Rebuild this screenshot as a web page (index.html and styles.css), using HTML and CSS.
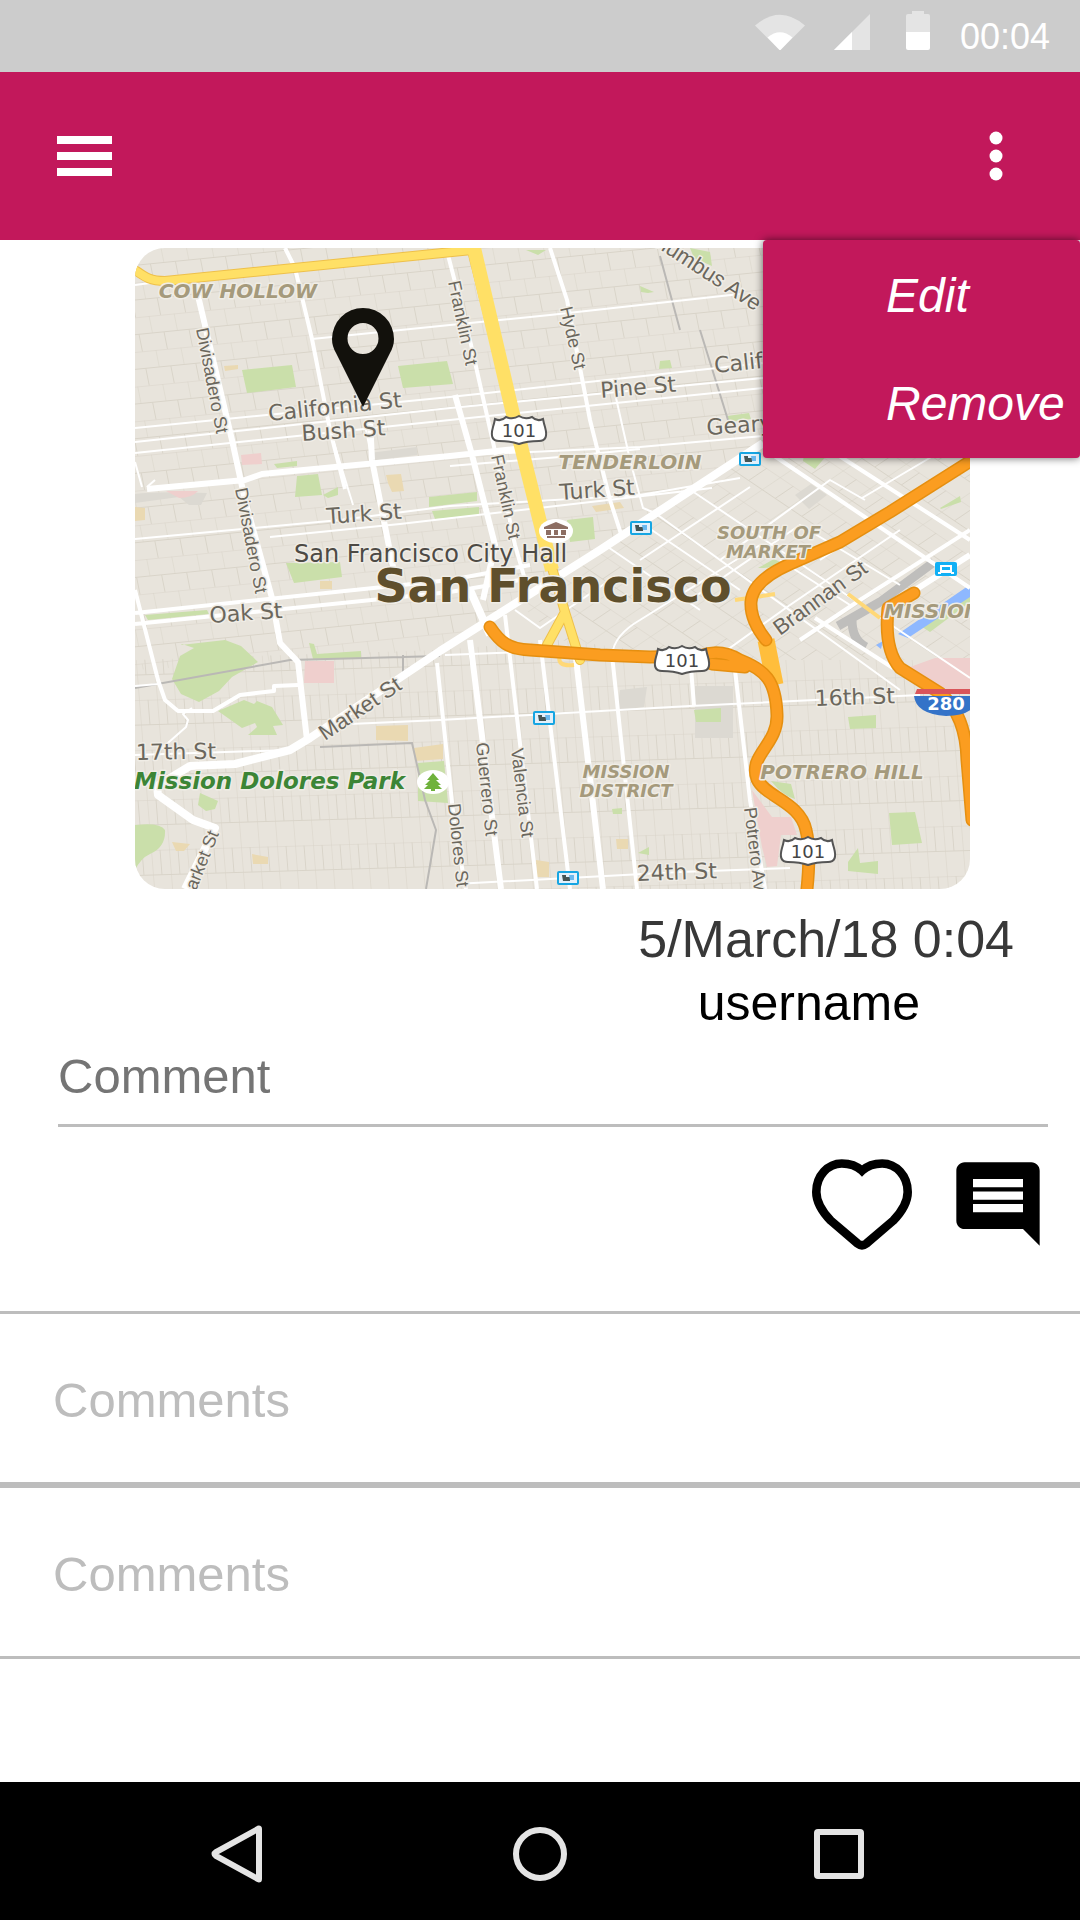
FILE: index.html
```html
<!DOCTYPE html>
<html lang="en">
<head>
<meta charset="utf-8">
<meta name="viewport" content="width=device-width, initial-scale=1">
<title>Post</title>
<link rel="stylesheet" href="styles.css">
</head>
<body>
<div class="status-bar">
  <svg class="status-icons" viewBox="755 11 175 39" width="175" height="39" aria-hidden="true">
    <path class="dim" d="M755 25.500Q780 4 805 25.500L780 50.500z"/>
    <path class="lit" d="M767.500 37.500Q780 27 792.500 37.500L780 50.500z"/>
    <path class="dim" d="M834 50L870 14V50z"/>
    <path class="lit" d="M834 50L852 32V50z"/>
    <path class="dim" d="M912 11h12v3h4q2 0 2 2v16h-24V16q0-2 2-2h4z"/>
    <path class="lit" d="M906 32h24v16q0 2-2 2h-20q-2 0-2-2z"/>
  </svg>
  <time class="clock">00:04</time>
</div>

<header class="app-bar">
  <button class="icon-button" type="button" aria-label="Menu">
    <svg viewBox="0 0 55 40" width="55" height="40"><path fill="#fff" d="M0 0h55v8H0zM0 16h55v8H0zM0 32h55v8H0z"/></svg>
  </button>
  <button class="icon-button" type="button" aria-label="More options" aria-expanded="true">
    <svg viewBox="0 0 14 50" width="14" height="50" fill="#fff"><circle cx="7" cy="7" r="6.500"/><circle cx="7" cy="25" r="6.500"/><circle cx="7" cy="43" r="6.500"/></svg>
  </button>
  <div class="menu">
    <button class="menu-item" type="button">Edit</button>
    <button class="menu-item" type="button">Remove</button>
  </div>
</header>

<main class="post">
  <svg class="map" viewBox="135 248 835 641" role="img" aria-label="Map of San Francisco">
    <defs>
      <pattern id="grid-north" width="25" height="34" patternUnits="userSpaceOnUse" patternTransform="matrix(1 -0.1 0.2 1 135 248)">
        <path class="lane" d="M0 0H25M0 17H25M0 0V17M12 17V34"/>
      </pattern>
      <pattern id="grid-south" width="18" height="50" patternUnits="userSpaceOnUse" patternTransform="matrix(1 -0.03 0.08 1 135 650)">
        <path class="lane" d="M0 0H18M0 25H18M0 0V50M9 0V25"/>
      </pattern>
      <pattern id="grid-soma" width="32" height="44" patternUnits="userSpaceOnUse" patternTransform="matrix(0.83 0.56 -0.83 0.56 0 0)">
        <path class="lane" d="M0 0H32M0 22H32M0 0V44M16 0V22"/>
      </pattern>
      <g id="shield">
        <path fill="#fff" stroke="#555" stroke-width="2" d="M-24-11q6 3 11-2q7 3 13-1q6 4 13 1q5 5 11 2q1 5 2 8q4 14-6 14q-12 0-20 3q-8-3-20-3q-10 0-6-14q1-3 2-8z"/>
        <text class="shield-text" y="7">101</text>
      </g>
      <g id="transit">
        <rect x="-10" y="-6" width="20" height="12" rx="1" fill="#e3f1fb" stroke="#16a5e2" stroke-width="2"/>
        <path fill="#455" d="M-6-3h4v2h4v4h-7z"/><path fill="#6bb9ef" d="M1-3h5v5H2z"/>
      </g>
    </defs>

    <rect x="135" y="248" width="835" height="641" fill="#e8e4dc"/>
    <path fill="url(#grid-north)" d="M135 248H970V440L760 440L440 650L135 670z"/>
    <path fill="url(#grid-south)" d="M135 660L440 650L560 640L720 660H970V889H135z"/>
    <path fill="url(#grid-soma)" d="M760 440H970V660H720L560 640L520 605z"/>

    <g fill="#dcd9d2">
      <path d="M135 494q20-3 72-1l-6 12h-12l-10-8l-44 6z"/><path d="M369 453l48-6v8l-48 6zM620 690l27-3l-3 20l-27 3zM695 686h38v52h-38z"/>
      <path d="M795 495l16-11l16 11l-18 14z"/>
    </g>
    <g fill="#cadfaa">
      <path d="M242 370l50-5l4 22l-49 6zM398 366l49-5l6 23l-50 4zM421 238l11-1v6l-10 2zM274 464l23-3v5l-20 2zM297 476l21-2l4 21l-27 2zM323 495l15-8v8l-10 3zM429 497l48-5v9l-48 6zM432 511l47-4v8l-44 4z"/>
      <path d="M286 563l54-1l2 15l-48 6zM145 615l62-5l2 4l-61 6zM181 645l44-5l16 6l17 16l-26 15l-13 14l-20 11l-18-8l-9-15l8-23l14-8l-12-4z"/>
      <path d="M218 711l26-11l10 4l3-3l15 6l11 18l-10 1l4 9h-29l9-8l-2-4l-13 5zM309 643l5 1l3 10l44-3v7l-48 1zM418 763l26-2l4 42l-30-2zM200 793l18 8l-3 8l-9 2l-8-6zM135 825q25-3 30 5q1 17-15 24q-9 4-15 16z"/>
      <path d="M567 520l26-3l2 22l-25 3zM526 250h20l-8 5zM640 286l14 6l-6 1l-7-1zM660 361l10-1l2 8l-13 1zM727 416l22-3l2 6l-22 3zM804 455l24-1l-13 15l-12-8zM940 508l20-12l1 6l-20 7z"/>
      <path d="M694 710l27-2v14h-25zM848 717l28-2v13l-26 1zM889 813l26-1l7 31l-30 2zM848 862l10-14l2 15l18-2v13l-30-3zM771 781l20 3l4 15q-12-3-24-18zM612 809l10-1v6h-9zM638 853l11-6v8zM690 248l20 4l2 14l-18-8zM758 568l16-9l12 6l-22 3z"/>
      <path d="M919 625l51-30v7l-40 30z"/>
    </g>
    <g fill="#efcfcd"><path d="M241 455l20-2l1 11l-20 1zM166 491h32q-6 7-19 7zM305 661h29v22h-30zM910 667l25-9h35v35h-30zM752 790l20 27h19l6 18h-16l-4 31l-10 1l-5-20z"/></g>
    <g fill="#ead9b2"><path d="M386 475l15-1l3 17l-12 1l-4-9zM135 507l10 1v12l-10 1zM224 366l14-1v4l-13 2zM376 726l32-1v16l-32-1zM414 748l29-4v15l-28 2zM172 842l18 2l-6 7h-8zM252 854l16 3v7h-15zM320 581h12v8h-12zM592 506l28-4l4 6l-28 4zM536 860l13 2v15h-12zM616 839h12v10h-11z"/></g>
    <path fill="#8eb8ff" d="M898 634l70-48h2v11l-62 41zM876 645l7-4l-2 8z"/>
    <path fill="none" stroke="#bfbebc" stroke-width="9" d="M838 626L880 602L934 562M852 620q0 20 14 27"/>
    <path fill="none" stroke="#bab8b5" stroke-width="2" d="M135 688L290 660L440 656M320 747L412 743L425 800L436 830L426 889M660 256L680 330M700 330L728 420M403 655v25"/>

    <!-- local streets -->
    <g class="road thin">
      <path d="M312 339L450 325L550 315L740 294M135 428L450 397L763 363M135 442L450 408L763 378M135 453L450 420L763 388M440 456L640 447L763 436M450 466L560 457L640 449M135 539L340 520L450 506L640 495L740 478M270 537L400 524L712 488M135 285L165 281"/>
      <path d="M612 380L630 460L643 508L655 513L900 690M135 755L290 750M350 724L440 720L690 706L920 695M135 686L158 684M445 655L545 651M455 884L680 872L790 868M365 425L372 460L392 570M330 430L353 505"/>
      <path d="M135 462L142 487M155 480L147 487M160 750L186 727L188 720L183 714L192 708"/>
      <path d="M692 491L970 678M640 522L740 590M605 545L700 610M515 610L540 628L610 580M720 560L830 480L865 500M640 560L750 487M690 600L800 525L900 585M612 655Q614 635 640 620L760 545M720 655L790 605L900 530M780 560L850 605M862 498L960 440M820 560L940 480"/>
    </g>
    <!-- avenues -->
    <g class="road">
      <path d="M285 248L295 268L312 339L330 430L345 489M448 255L470 340L497 460L515 545L528 590M550 248L567 300L590 420L610 500L622 537M135 590L158 680L165 700L178 711L213 711L240 695L274 691V686L298 685M135 613L450 580L530 565M135 624L450 592L520 580"/>
      <path d="M505 615L537 889M540 640L570 889M612 655L637 889M735 670L750 800L765 889M690 655L694 706M437 663L455 830L466 889"/>
      <path d="M770 453L970 588M830 450L970 540M800 640L860 600L970 530M815 618L893 668"/>
    </g>
    <!-- main roads -->
    <g class="road wide">
      <path d="M195 283L232 440L245 500L272 598L280 643L298 662L307 740M147 489L245 480L262 474L450 456L525 448M455 395L472 455L495 545L483 600M370 420L372 460L394 572M470 640L480 720L501 889M575 650L603 889"/>
      <path class="market" d="M185 889L215 828L193 820L158 795L157 786L190 766L235 764L290 750L310 738L440 651L600 550L763 443M470 590L490 635"/>
      <path d="M890 606L970 555"/>
    </g>

    <g class="highway yellow">
      <path class="edge" d="M135 270C145 277 150 281 165 281L472 250L512 410L552 568L565 612L547 645M565 612L580 660"/>
      <path d="M135 270C145 277 150 281 165 281L472 250L512 410L552 568L565 612L547 645M565 612L580 660"/>
    </g>
    <path fill="none" stroke="#ffe066" stroke-width="14" d="M474 248L512 410L552 570"/>
    <path fill="none" stroke="#ffd877" stroke-width="4" d="M848 594L880 618M560 655q-4 12 14 10M735 600l40-6"/>
    <path fill="none" stroke="#ffbe3c" stroke-width="17" d="M766 640L775 685"/>
    <g class="highway orange">
      <path class="edge" d="M490 627C500 642 508 649 530 650L600 655L650 657L700 656Q720 648 740 660C765 670 776 680 777 715C778 745 748 755 757 779C765 797 800 802 806 830Q811 850 807 889M712 664L745 667M980 455L890 512L840 542L790 564C765 575 752 588 751 602Q750 620 766 640M914 593L888 608Q884 650 900 668L940 693Q966 715 967 760L972 820"/>
      <path d="M490 627C500 642 508 649 530 650L600 655L650 657L700 656Q720 648 740 660C765 670 776 680 777 715C778 745 748 755 757 779C765 797 800 802 806 830Q811 850 807 889M712 664L745 667M980 455L890 512L840 542L790 564C765 575 752 588 751 602Q750 620 766 640M914 593L888 608Q884 650 900 668L940 693Q966 715 967 760L972 820"/>
    </g>

    <!-- district names -->
    <g class="district">
      <text x="238" y="298">COW HOLLOW</text>
      <text x="630" y="469">TENDERLOIN</text>
      <text class="two-line" x="769" y="539">SOUTH OF</text>
      <text class="two-line" x="768" y="558">MARKET</text>
      <text class="two-line" x="626" y="778">MISSION</text>
      <text class="two-line" x="626" y="797">DISTRICT</text>
      <text x="842" y="779">POTRERO HILL</text>
      <text class="from-left" x="884" y="618">MISSION BAY</text>
    </g>

    <!-- street names running across -->
    <g class="street">
      <text transform="translate(269 421) rotate(-6)">California St</text>
      <text transform="translate(302 441) rotate(-4)">Bush St</text>
      <text transform="translate(327 524) rotate(-4)">Turk St</text>
      <text transform="translate(210 623) rotate(-4)">Oak St</text>
      <text transform="translate(601 398) rotate(-5)">Pine St</text>
      <text transform="translate(560 500) rotate(-4)">Turk St</text>
      <text transform="translate(715 373) rotate(-6)">California St</text>
      <text transform="translate(707 435) rotate(-4)">Geary St</text>
      <text transform="translate(136 760) rotate(-1)">17th St</text>
      <text transform="translate(815 706) rotate(-2)">16th St</text>
      <text transform="translate(637 881) rotate(-2)">24th St</text>
    </g>
    <!-- street names running along slopes and avenues -->
    <g class="avenue">
      <text transform="translate(196 329) rotate(79)">Divisadero St</text>
      <text transform="translate(235 489) rotate(79)">Divisadero St</text>
      <text transform="translate(448 282) rotate(78)">Franklin St</text>
      <text transform="translate(491 456) rotate(78)">Franklin St</text>
      <text transform="translate(560 308) rotate(77)">Hyde St</text>
      <text transform="translate(476 743) rotate(84)">Guerrero St</text>
      <text transform="translate(511 749) rotate(83)">Valencia St</text>
      <text transform="translate(448 804) rotate(84)">Dolores St</text>
      <text transform="translate(744 808) rotate(83)">Potrero Ave</text>
      <text transform="translate(196 891) rotate(-68)">arket St</text>
      <text class="slope" transform="translate(325 741) rotate(-34)">Market St</text>
      <text class="slope" transform="translate(780 636) rotate(-36)">Brannan St</text>
      <text class="slope" transform="translate(650 243) rotate(33)">olumbus Ave</text>
    </g>

    <text class="place" x="294" y="562">San Francisco City Hall</text>
    <text class="city" x="553" y="602">San Francisco</text>
    <text class="park" x="134" y="789">Mission Dolores Park</text>

    <ellipse cx="433" cy="782" rx="16" ry="12" fill="#fff"/>
    <path fill="#6fb23c" d="M433 773l6 7h-3l5 5h-3l4 4h-7v2h-4v-2h-7l4-4h-3l5-5h-3z"/>
    <ellipse cx="556" cy="531" rx="17" ry="12" fill="#fff"/>
    <path fill="#8d6e63" d="M556 522l12 5v2h-24v-2zM546 530h5v5h-5zM554 530h4v5h-4zM561 530h5v5h-5zM547 536h18v2h-18z"/>

    <use href="#shield" x="519" y="430"/>
    <use href="#shield" x="682" y="660"/>
    <use href="#shield" x="808" y="851"/>
    <use href="#transit" x="750" y="459"/>
    <use href="#transit" x="641" y="528"/>
    <use href="#transit" x="544" y="718"/>
    <use href="#transit" x="568" y="878"/>
    <rect x="935" y="562" width="22" height="14" rx="2" fill="#12b0f5"/>
    <path fill="#fff" d="M940 565h12v7h2v2h-3v-1h-10v1h-3v-2h2zM942 567v3h8v-3z"/>
    <path fill="#d9555b" d="M917 689h53v5h-55z"/>
    <path fill="#3473c8" d="M914 696h64q-2 20-32 20q-30-2-32-20z"/>
    <text class="interstate" x="946" y="710">280</text>

    <path fill="#12110c" fill-rule="evenodd" d="M363 407L336 353Q332 346 332 339A31 31 0 0 1 394 339Q394 346 390 353zM363 323a15.500 15.500 0 1 0 0 31a15.500 15.500 0 1 0 0-31z"/>
  </svg>

  <div class="meta">
    <time class="date">5/March/18 0:04</time>
    <span class="username">username</span>
  </div>

  <input class="comment-input" type="text" placeholder="Comment" aria-label="Comment">

  <div class="actions">
    <button class="icon-button" type="button" aria-label="Like">
      <svg viewBox="755 805 302 274" width="100" height="91"><path fill="none" stroke="#000" stroke-width="26" d="M906 840C890 825 868 818 845 818C803 818 768 855 768 904C768 940 790 968 812 991L893 1060Q906 1070 919 1060L1000 991C1022 968 1044 940 1044 904C1044 855 1009 818 967 818C944 818 922 825 906 840z"/></svg>
    </button>
    <button class="icon-button" type="button" aria-label="Comments">
      <svg viewBox="0 0 24 24" width="100" height="100"><path d="M22 4c0-1.100-.9-2-2-2H4c-1.100 0-2 .9-2 2v12c0 1.100.9 2 2 2h14l4 4V4zM18 14H6v-2h12v2zM18 11H6V9h12v2zM18 8H6V6h12v2z"/></svg>
    </button>
  </div>

  <ul class="comments">
    <li class="comment">Comments</li>
    <li class="comment">Comments</li>
  </ul>
</main>

<nav class="nav-bar" aria-label="System">
  <button class="icon-button" type="button" aria-label="Back">
    <svg viewBox="2 0 60 60" width="60" height="60"><path class="nav-line" d="M51 5V55Q51 56 50 55L8 32Q5 30 8 28L50 5Q51 4 51 5z"/></svg>
  </button>
  <button class="icon-button" type="button" aria-label="Home">
    <svg viewBox="0 0 60 60" width="60" height="60"><circle class="nav-line" cx="30" cy="30" r="24"/></svg>
  </button>
  <button class="icon-button" type="button" aria-label="Recent apps">
    <svg viewBox="0 0 60 60" width="60" height="60"><rect class="nav-line" x="7" y="8" width="44" height="44" rx="1"/></svg>
  </button>
</nav>
</body>
</html>
```

FILE: styles.css
```css
* {
  box-sizing: border-box;
}

body {
  margin: 0;
  min-height: 100vh;
  display: flex;
  flex-direction: column;
  background: #fff;
  color: #000;
  font-family: "Liberation Sans", Arial, sans-serif;
}

button {
  margin: 0;
  padding: 0;
  border: 0;
  background: none;
  color: inherit;
  font: inherit;
  cursor: pointer;
}

svg {
  display: block;
}

.icon-button {
  display: flex;
  align-items: center;
  justify-content: center;
}

/* Status bar */
.status-bar {
  display: flex;
  justify-content: flex-end;
  align-items: center;
  gap: 30px;
  height: 72px;
  padding-right: 30px;
  background: #ccc;
  color: #fff;
}

.status-icons {
  margin-bottom: 11px;
}

.clock {
  padding-top: 2px;
  font-size: 36px;
  line-height: 40px;
}

.dim {
  fill: #e4e4e4;
}

.lit {
  fill: #fff;
}

/* App bar */
.app-bar {
  position: relative;
  display: flex;
  justify-content: space-between;
  align-items: center;
  height: 168px;
  padding: 0 77px 0 57px;
  background: #c2185b;
}

.menu {
  position: absolute;
  top: 100%;
  right: 0;
  width: 317px;
  padding-top: 2px;
  border-radius: 4px;
  background: #c2185b;
  box-shadow: 0 0 8px rgba(0, 0, 0, 0.6);
  color: #fff;
}

.menu-item {
  display: block;
  width: 100%;
  padding-left: 123px;
  font-size: 48px;
  font-style: italic;
  line-height: 108px;
  text-align: left;
}

/* Post */
.post {
  flex: 1;
  padding-top: 8px;
}

.map {
  width: calc(100% - 245px);
  height: auto;
  margin-left: 135px;
  border-radius: 30px;
  overflow: hidden;
}

.meta {
  display: flex;
  flex-direction: column;
  align-items: flex-end;
  padding: 18px 66px 9px 0;
  line-height: 64px;
}

.date {
  color: #383838;
  font-size: 52px;
}

.username {
  margin-right: 94px;
  font-size: 50px;
}

.comment-input {
  display: block;
  width: calc(100% - 90px);
  height: 83px;
  margin: 0 32px 0 58px;
  padding: 0 0 17px;
  border: 0;
  border-bottom: 3px solid #bdbdbd;
  border-radius: 0;
  background: none;
  font: 49px "Liberation Sans", Arial, sans-serif;
}

.comment-input::placeholder {
  color: #757575;
}

.actions {
  display: flex;
  justify-content: flex-end;
  align-items: center;
  gap: 36px;
  padding: 27px 32px 57px;
}

.comments {
  margin: 0;
  padding: 0;
  list-style: none;
}

.comment {
  padding: 58px 52px 54px 53px;
  border: solid #bdbdbd;
  border-width: 3px 0;
  color: #bdbdbd;
  font-size: 49px;
  line-height: 56px;
}

/* Navigation bar */
.nav-bar {
  display: grid;
  grid-template-columns: repeat(3, 1fr);
  height: 138px;
  padding: 5px 90px 0;
  background: #000;
}

.nav-line {
  fill: none;
  stroke: #e4e4e4;
  stroke-width: 6;
}

/* Map drawing */
.lane {
  fill: none;
  stroke: #d9d4c9;
  stroke-width: 1;
}

.road {
  fill: none;
  stroke: #fff;
  stroke-width: 4;
  stroke-linejoin: round;
}

.thin {
  stroke-width: 2;
}

.wide {
  stroke-width: 6;
}

.market {
  stroke-width: 8;
}

.highway {
  fill: none;
  stroke-linecap: round;
  stroke-linejoin: round;
}

.yellow {
  stroke: #ffe066;
  stroke-width: 8;
}

.yellow .edge {
  stroke: #eec04b;
  stroke-width: 10;
}

.orange {
  stroke: #fb9d20;
  stroke-width: 10;
}

.orange .edge {
  stroke: #e58f10;
  stroke-width: 13;
}

.map text {
  paint-order: stroke;
  stroke: #f0ede6;
  stroke-width: 3px;
  stroke-linejoin: round;
}

.district {
  fill: #a59a7c;
  font: italic bold 20px "DejaVu Sans", sans-serif;
  text-anchor: middle;
}

.district .two-line {
  font-size: 18px;
}

.district .from-left {
  text-anchor: start;
}

.street {
  fill: #6b675d;
  font: 22px "DejaVu Sans", sans-serif;
}

.avenue {
  fill: #6b675d;
  font: 18px "Liberation Sans", Arial, sans-serif;
}

.avenue .slope {
  font-size: 22px;
}

.place {
  fill: #4d4a45;
  font: 24px "DejaVu Sans", sans-serif;
}

.city {
  fill: #5f4f2c;
  font: bold 46px "DejaVu Sans", sans-serif;
  text-anchor: middle;
}

.park {
  fill: #3c8536;
  font: italic bold 23px "DejaVu Sans", sans-serif;
}

.map .shield-text,
.map .interstate {
  stroke: none;
  text-anchor: middle;
}

.shield-text {
  fill: #444;
  font: 18px "DejaVu Sans", sans-serif;
}

.interstate {
  fill: #fff;
  font: bold 18px "DejaVu Sans", sans-serif;
}
```
